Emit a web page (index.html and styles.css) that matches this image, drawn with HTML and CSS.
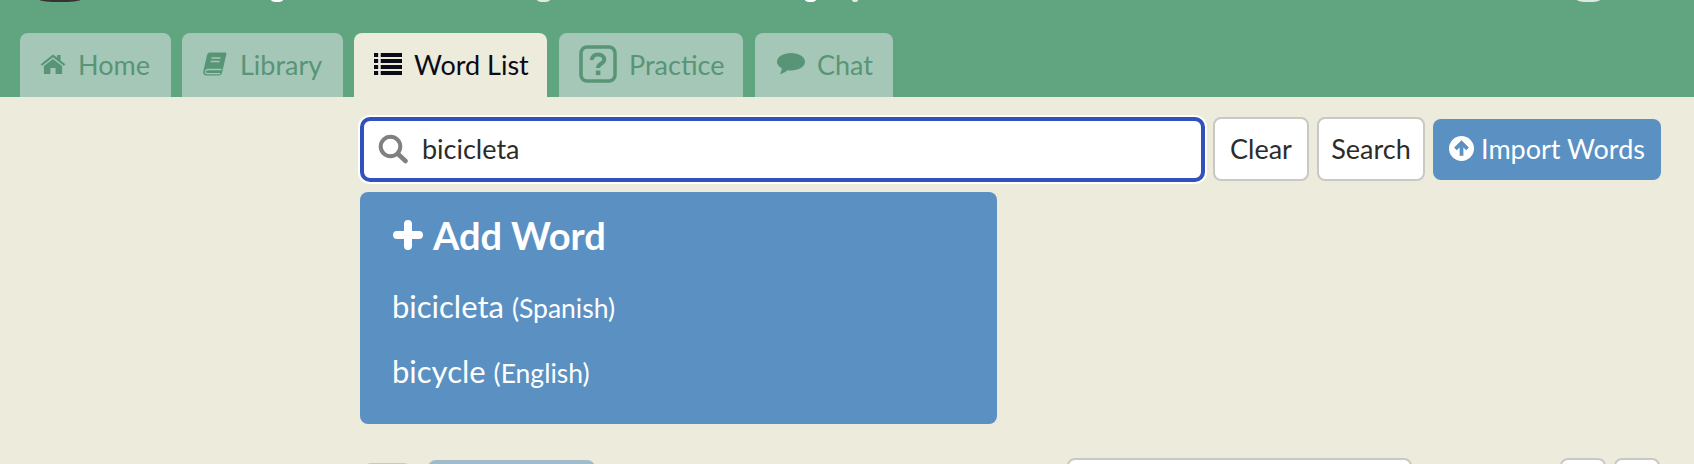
FILE: index.html
```html
<!DOCTYPE html>
<html lang="en">
<head>
  <meta charset="UTF-8" />
  <title>Word List</title>
  <link rel="stylesheet" href="styles.css">
</head>
<body>
  <header class="top">
    <div class="top-bits">
      <span class="bit bit-dark"></span>
      <span class="bit bit-a"></span>
      <span class="bit bit-b"></span>
      <span class="bit bit-c"></span>
      <span class="bit bit-d"></span>
      <span class="bit bit-e"></span>
    </div>
    <nav class="tabs">
      <a class="tab tab-home">
        <svg class="ico" width="26" height="22" viewBox="0 0 24 22" preserveAspectRatio="none"><path fill="currentColor" d="M12 1.500 0.600 11.200l1.400 1.600L12 4.300l10 8.500 1.400-1.600-4.400-3.800V2h-3.200v2.600zM12 6 3.600 13.100V21h6v-6h4.800v6h6v-7.900z"/></svg>
        Home
      </a>
      <a class="tab tab-library">
        <svg class="ico" width="26" height="25" viewBox="0 0 24 25"><path fill="currentColor" d="M7 0.500h15c1.200 0 1.600.9 1.300 2l-4.200 18c-.4 1.800-1.500 3-3.400 3H3.500C1 23.500-.2 21.500.3 19.500L4 3c.4-1.500 1.500-2.500 3-2.500z"/><path fill="none" stroke="#a5c7b7" stroke-width="1.300" d="M8.500 6h9M7.600 9.500h9M2.500 19.300c.3-1.200 1.200-1.800 2.500-1.800h13.500M2.500 19.700c-.2 1.200.5 2 1.700 2h13"/></svg>
        Library
      </a>
      <a class="tab tab-active tab-words">
        <svg class="ico" width="28" height="22" viewBox="0 0 27 22" preserveAspectRatio="none"><path fill="currentColor" d="M0 0h4v4H0zM6.500 0H27v4H6.500zM0 6h4v4H0zM6.500 6H27v4H6.500zM0 12h4v4H0zM6.500 12H27v4H6.500zM0 18h4v4H0zM6.500 18H27v4H6.500z"/></svg>
        Word List
      </a>
      <a class="tab tab-practice">
        <svg class="ico" width="38" height="38" viewBox="0 0 38 38"><rect x="2" y="2" width="34" height="34" rx="6" fill="none" stroke="currentColor" stroke-width="3.500"/><path fill="none" stroke="currentColor" stroke-width="4" d="M12.800 15c0-3.500 2.700-5.500 6.200-5.500s6.200 2 6.200 5c0 4.500-6.200 4-6.200 8.500"/><rect x="16.800" y="25.500" width="4.600" height="4.600" fill="currentColor"/></svg>
        Practice
      </a>
      <a class="tab tab-chat">
        <svg class="ico" width="28" height="22" viewBox="0 0 28 22"><path fill="currentColor" d="M14 0C6.300 0 0 3.900 0 8.800c0 2.700 1.900 5 4.900 6.600-.3 2-1.500 4.200-1.900 5.800 2.700-.6 6-2.400 7.400-3.900 1.200.2 2.400.3 3.600.3 7.700 0 14-3.900 14-8.800S21.700 0 14 0z"/></svg>
        Chat
      </a>
    </nav>
  </header>

  <main class="content">
    <div class="search-row">
      <div class="search-box">
        <svg class="search-ico" width="30" height="30" viewBox="0 0 30 30"><circle cx="12.500" cy="12.500" r="9.800" fill="none" stroke="currentColor" stroke-width="4"/><path stroke="currentColor" stroke-width="4.500" stroke-linecap="round" d="M20 20l7.500 7"/></svg>
        <span class="search-text">bicicleta</span>
      </div>
      <button class="btn btn-clear">Clear</button>
      <button class="btn btn-search">Search</button>
      <button class="btn btn-import">
        <svg width="25" height="25" viewBox="0 0 24 24"><circle cx="12" cy="12" r="12" fill="#fff"/><path fill="none" stroke="#5b90c3" stroke-width="3.600" d="M12 19V7M6.200 12.400 12 6.700l5.800 5.700"/></svg>
        Import Words
      </button>
    </div>

    <div class="add-panel">
      <div class="add-title">
        <svg width="30" height="30" viewBox="0 0 30 30"><path stroke="#fff" stroke-width="8" stroke-linecap="round" d="M15 4v22M4 15h22"/></svg>
        Add Word
      </div>
      <div class="add-option">bicicleta <small>(Spanish)</small></div>
      <div class="add-option">bicycle <small>(English)</small></div>
    </div>

    <div class="bottom-row">
      <span class="stub stub-grey"></span>
      <span class="stub stub-blue"></span>
      <span class="stub stub-input"></span>
      <span class="stub stub-page"></span>
      <span class="stub stub-page"></span>
    </div>
  </main>
</body>
</html>
```

FILE: styles.css
```css
* {
  box-sizing: border-box;
}

html, body {
  height: 464px;
  overflow: hidden;
}

body {
  margin: 0;
  background: #edebdc;
  color: #2b2b2b;
  font-family: "Lato", "Noto Sans", sans-serif;
}

svg {
  flex: none;
}

.top {
  height: 97px;
  background: #60a480;
  display: flex;
  flex-direction: column;
}

/* tips of the page title, cut off by the top of the window */
.top-bits {
  height: 33px;
  position: relative;
}

.bit {
  position: absolute;
  top: 0;
  height: 2px;
  background: #fff;
  border-radius: 0 0 50% 50% / 0 0 100% 100%;
}

.bit-dark { left: 40px; width: 40px; background: #333; }
.bit-a { left: 271px; width: 12px; }
.bit-b { left: 537px; width: 13px; background: #dfe9e3; }
.bit-c { left: 805px; width: 11px; }
.bit-d { left: 852px; width: 6px; background: #dfe9e3; }
.bit-e { left: 1577px; width: 23px; background: #dfe9e3; }

.tabs {
  display: flex;
  gap: 11px;
  padding-left: 20px;
  height: 64px;
}

.tab {
  display: flex;
  flex: none;
  align-items: center;
  height: 64px;
  padding: 0 0 2px 20px;
  gap: 12px;
  background: #a5c7b7;
  color: #589576;
  border-radius: 8px 8px 0 0;
  font-size: 27px;
  white-space: nowrap;
}

.tab-active {
  background: #edebdc;
  color: #0b0b18;
}

.tab-home { width: 151px; }
.tab-library { width: 161px; }
.tab-words { width: 193px; }
.tab-practice { width: 184px; margin-left: 1px; }
.tab-chat { width: 138px; margin-left: 1px; padding-left: 22px; }

.content {
  height: 367px;
  overflow: hidden;
  padding: 20px 0 0 360px;
}

.search-row {
  display: flex;
  align-items: flex-start;
  gap: 8px;
}

.search-box {
  flex: none;
  width: 845px;
  height: 65px;
  display: flex;
  align-items: center;
  gap: 15px;
  padding: 0 0 1px 14px;
  background: #fff;
  border: 4px solid #3152bd;
  border-radius: 10px;
  box-shadow: 0 0 0 2px #fff;
  font-size: 27px;
}

.search-text {
  margin: -2px 0 0 -1px;
}

.search-ico {
  color: #808080;
}

.btn {
  flex: none;
  height: 64px;
  padding: 0 0 2px;
  background: #fff;
  color: #2b2b2b;
  border: 2px solid #c9c8c2;
  border-radius: 8px;
  font-family: inherit;
  font-size: 27px;
}

.btn-clear { width: 96px; }
.btn-search { width: 108px; }

.btn-import {
  width: 228px;
  height: 61px;
  margin-top: 2px;
  display: flex;
  align-items: center;
  justify-content: center;
  gap: 7px;
  background: #5b90c3;
  color: #fff;
  border: 0;
}

.add-panel {
  width: 637px;
  height: 232px;
  margin-top: 10px;
  padding: 21px 0 0 33px;
  background: #5b90c3;
  color: #fff;
  border-radius: 8px;
}

.add-title {
  display: flex;
  align-items: center;
  gap: 10px;
  font-size: 38px;
  font-weight: 700;
  height: 44px;
}

.add-option {
  font-size: 31px;
  margin: 27px 0 0 -1px;
  height: 44px;
  line-height: 44px;
}

.add-option + .add-option {
  margin-top: 21px;
}

.add-option small {
  font-size: 26.5px;
}

.bottom-row {
  display: flex;
  margin-top: 34px;
  height: 40px;
}

.stub {
  display: block;
  flex: none;
  height: 40px;
  border-radius: 8px;
}

.stub-grey {
  width: 49px;
  margin: 5px 0 0 3px;
  background: #c9c8c2;
}

.stub-blue {
  width: 167px;
  margin: 2px 0 0 16px;
  background: #a0bbcb;
}

.stub-input {
  width: 345px;
  margin-left: 472px;
  background: #fff;
  border: 2px solid #c9c8c2;
}

.stub-page {
  width: 46px;
  background: #fff;
  border: 2px solid #c9c8c2;
}

.stub-input + .stub-page {
  margin-left: 148px;
}

.stub-page + .stub-page {
  margin-left: 8px;
}
```
